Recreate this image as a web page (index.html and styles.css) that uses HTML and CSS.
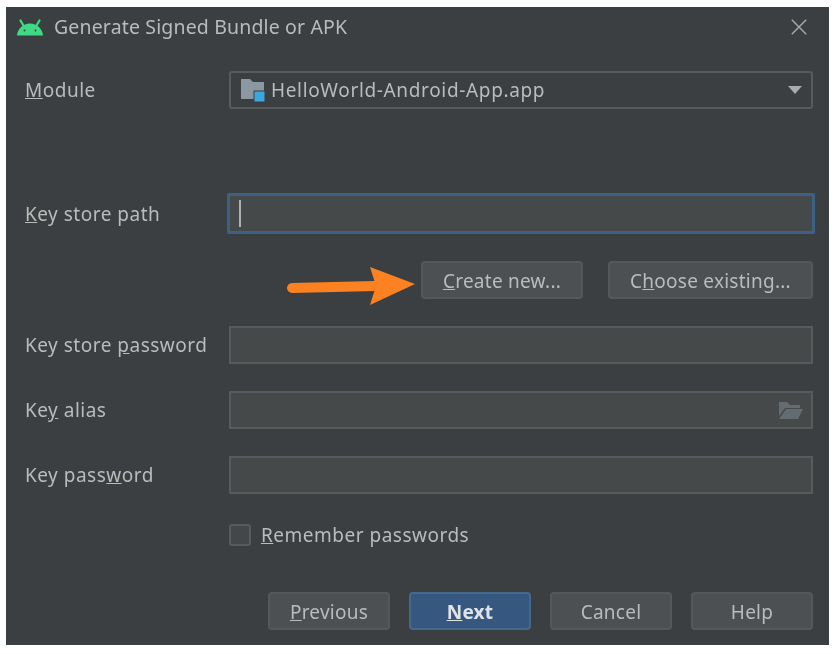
FILE: index.html
```html
<!DOCTYPE html>
<html lang="en">

<head>
    <meta charset="UTF-8">
    <meta name="viewport" content="width=device-width, initial-scale=1.0">
    <title>Generate Signed Bundle or APK</title>
    <link rel="stylesheet" href="styles.css">
</head>

<body>
    <div class="dialog">
        <div class="title-bar">
            <svg class="android-icon" width="26" height="17" viewBox="0 0 26 17">
                <path d="M0 16.500C.6 9.500 6 4.500 13 4.500s12.400 5 13 12z" fill="#3ddc84" />
                <path d="M6.500 6.500 3.500 1.500M19.500 6.500l3-5" stroke="#3ddc84" stroke-width="2.200" stroke-linecap="round" />
                <circle cx="7.500" cy="11.500" r="1" fill="#3c3f41" />
                <circle cx="18.500" cy="11.500" r="1" fill="#3c3f41" />
            </svg>
            <span class="title-text">Generate Signed Bundle or APK</span>
            <svg class="close-icon" width="16" height="16" viewBox="0 0 16 16">
                <path d="M.8.800l14.400 14.400M15.200.800.800 15.200" stroke="#a4a6a8" stroke-width="1.500" />
            </svg>
        </div>

        <div class="form">
            <div class="row row-module">
                <label class="field-label"><u>M</u>odule</label>
                <div class="field field-select">
                    <svg width="24" height="24" viewBox="0 0 24 24">
                        <path d="M0 1h9l3 3h11v17H0z" fill="#8b97a1" />
                        <rect x="13" y="13" width="11" height="11" fill="#3ea6dc" stroke="#3c3f41" stroke-width="1" />
                    </svg>
                    <span class="field-text">HelloWorld-Android-App.app</span>
                    <span class="caret"></span>
                </div>
            </div>

            <div class="row row-path">
                <label class="field-label"><u>K</u>ey store path</label>
                <div class="field field-focus"><span class="text-cursor"></span></div>
            </div>

            <div class="row-actions">
                <button class="btn btn-create"><u>C</u>reate new...</button>
                <button class="btn btn-choose">C<u>h</u>oose existing...</button>
            </div>

            <div class="row row-next">
                <label class="field-label">Key store <u>p</u>assword</label>
                <div class="field"></div>
            </div>

            <div class="row row-next">
                <label class="field-label">Ke<u>y</u> alias</label>
                <div class="field field-alias">
                    <svg width="24" height="17" viewBox="0 0 24 17">
                        <path d="M0 0h8l3 3h10v3H6L0 14z" fill="#626c71" />
                        <path d="M7 7h17l-5 10H0z" fill="#626c71" />
                    </svg>
                </div>
            </div>

            <div class="row row-next">
                <label class="field-label">Key pass<u>w</u>ord</label>
                <div class="field"></div>
            </div>

            <label class="remember">
                <span class="checkbox"></span>
                <span><u>R</u>emember passwords</span>
            </label>

            <div class="footer">
                <button class="btn btn-footer"><u>P</u>revious</button>
                <button class="btn btn-footer btn-primary"><u>N</u>ext</button>
                <button class="btn btn-footer">Cancel</button>
                <button class="btn btn-footer">Help</button>
            </div>
        </div>

        <!-- annotation drawn over the dialog -->
        <svg class="arrow" width="132" height="42" viewBox="0 0 132 42">
            <path d="M7 23 90 21" stroke="#fb8121" stroke-width="10" stroke-linecap="round" />
            <path d="M85 2 130 19 85 40 91 21z" fill="#fb8121" />
        </svg>
    </div>
</body>

</html>
```

FILE: styles.css
```css
:root {
    --dialog-bg: #3c3f41;
    --field-bg: #46494a;
    --field-border: #585a5b;
    --button-bg: #4c5052;
    --button-border: #55585a;
    --primary-bg: #365880;
    --primary-border: #436a8c;
    --focus-border: #3d6185;
    --text-color: #bbbbbb;
}

body {
    margin: 0;
    background: #ffffff;
    font-family: "Noto Sans", "Open Sans", sans-serif;
    color: var(--text-color);
}

.dialog {
    position: relative;
    box-sizing: border-box;
    width: 823px;
    height: 638px;
    margin: 7px 0 0 6px;
    background: var(--dialog-bg);
    font-size: 19px;
    letter-spacing: 0.5px;
    filter: blur(0.35px);
}

.title-bar {
    display: flex;
    align-items: center;
    height: 40px;
    padding: 0 22px 0 11px;
}

.title-text {
    margin: 0 0 2px 11px;
    font-size: 19.500px;
    letter-spacing: 0.15px;
}

.close-icon {
    margin-left: auto;
}

.form {
    padding: 24px 16px 0 19px;
}

.row {
    display: grid;
    grid-template-columns: 204px 1fr;
    align-items: center;
}

.row-path {
    margin-top: 84px;
}

.row-next {
    margin-top: 27px;
}

.field {
    box-sizing: border-box;
    display: flex;
    align-items: center;
    height: 38px;
    background: var(--field-bg);
    border: 2px solid var(--field-border);
}

.field-select {
    background: var(--dialog-bg);
    border-radius: 3px;
    padding: 0 9px 0 10px;
}

.field-select svg {
    flex: none;
}

.field-text {
    margin-left: 6px;
    letter-spacing: 0.65px;
}

.caret {
    margin-left: auto;
    width: 0;
    height: 0;
    border-left: 7px solid transparent;
    border-right: 7px solid transparent;
    border-top: 8px solid #a9abad;
}

.field-focus {
    height: 41px;
    margin: 0 -2px;
    border: 3px solid var(--focus-border);
    border-radius: 2px;
    padding-left: 9px;
}

.text-cursor {
    width: 2px;
    height: 27px;
    background: #aeb0b1;
}

.field-alias {
    justify-content: flex-end;
    padding-right: 8px;
}

.row-actions {
    display: flex;
    justify-content: flex-end;
    gap: 25px;
    margin-top: 27px;
}

.btn {
    box-sizing: border-box;
    height: 38px;
    padding: 1px 0 0;
    background: var(--button-bg);
    border: 2px solid var(--button-border);
    border-radius: 4px;
    color: var(--text-color);
    font-family: inherit;
    font-size: 19px;
    letter-spacing: 0.25px;
}

.btn-create {
    width: 162px;
}

.btn-choose {
    width: 205px;
}

.remember {
    display: flex;
    align-items: center;
    gap: 10px;
    margin: 28px 0 0 204px;
}

.checkbox {
    box-sizing: border-box;
    width: 22px;
    height: 22px;
    border: 2px solid var(--field-border);
    border-radius: 3px;
    background: #43474a;
}

.footer {
    display: flex;
    justify-content: flex-end;
    gap: 19px;
    margin-top: 44px;
}

.btn-footer {
    width: 122px;
}

.btn-primary {
    background: var(--primary-bg);
    border-color: var(--primary-border);
    color: #dfe3e6;
    font-weight: bold;
}

.arrow {
    position: absolute;
    left: 279px;
    top: 258px;
}
```
